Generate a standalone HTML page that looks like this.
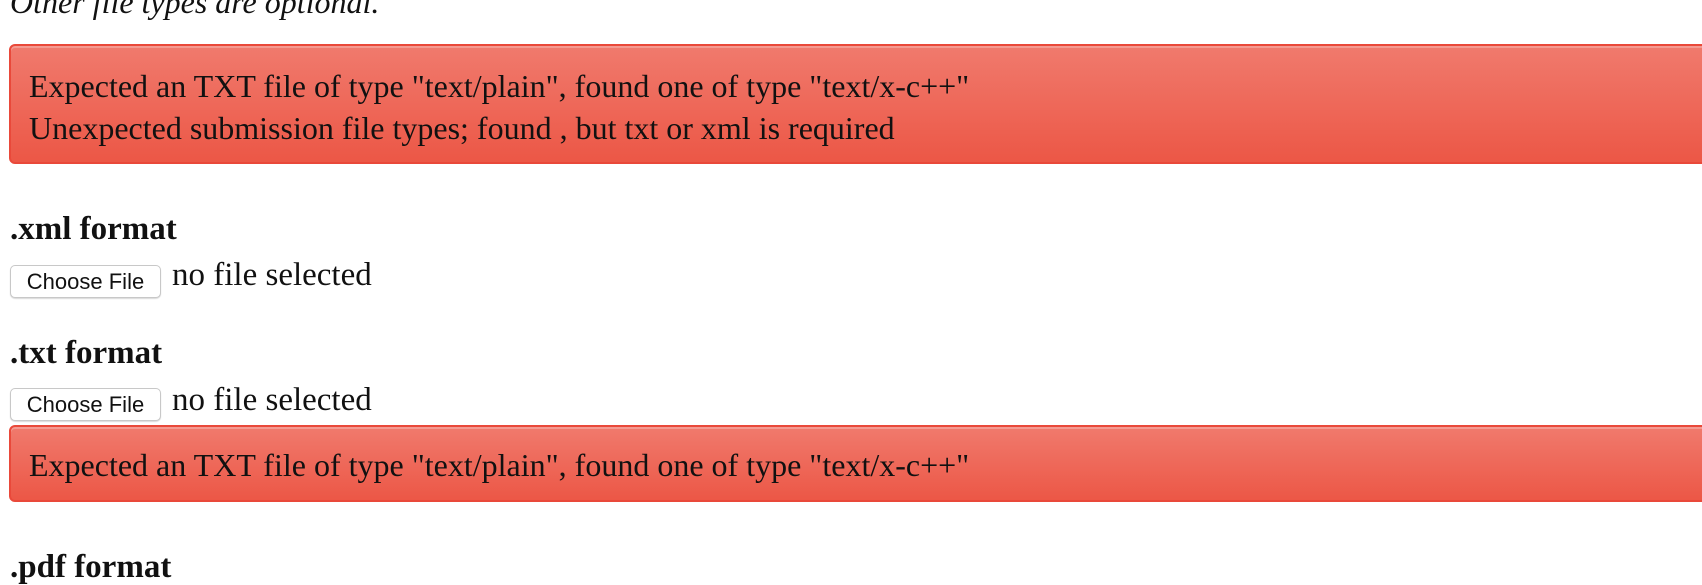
<!DOCTYPE html>
<html><head><style>
html,body{margin:0;padding:0;background:#fff;width:1702px;height:582px;overflow:hidden;font-family:"Liberation Serif",serif;color:#111}
.a{position:absolute}
.alert{position:absolute;left:9px;width:1720px;border:2px solid #e9493a;border-radius:6px;background:linear-gradient(#f07a6d,#ec5746);box-shadow:inset 0 2px 0 rgba(255,255,255,.25);box-sizing:border-box}
.alert div{position:absolute;left:18px;font-size:32px;white-space:nowrap;color:#111}
h3{position:absolute;left:10px;margin:0;font-size:33px;font-weight:bold;white-space:nowrap;line-height:1}
.btn{position:absolute;left:10px;width:151px;height:33px;border:1px solid #c8c8c8;border-radius:5px;background:#fff;box-sizing:border-box;font-family:"Liberation Sans",sans-serif;font-size:22px;text-align:center;line-height:32px;box-shadow:0 1px 1px rgba(0,0,0,.15)}
.nf{position:absolute;left:172px;font-size:33px;white-space:nowrap;line-height:1}
</style></head><body>
<div class="a" style="left:10px;top:-14px;font-size:32px;font-style:italic;line-height:1">Other file types are optional.</div>
<div class="alert" style="top:44px;height:120px">
<div style="top:19px;line-height:42px">Expected an TXT file of type "text/plain", found one of type "text/x-c++"<br>Unexpected submission file types; found , but txt or xml is required</div>
</div>
<h3 style="top:213px">.xml format</h3>
<div class="btn" style="top:265px">Choose File</div>
<div class="nf" style="top:259px">no file selected</div>
<h3 style="top:337px">.txt format</h3>
<div class="btn" style="top:388px">Choose File</div>
<div class="nf" style="top:384px">no file selected</div>
<div class="alert" style="top:425px;height:77px">
<div style="top:17px;line-height:42px">Expected an TXT file of type "text/plain", found one of type "text/x-c++"</div>
</div>
<h3 style="top:551px">.pdf format</h3>
</body></html>
